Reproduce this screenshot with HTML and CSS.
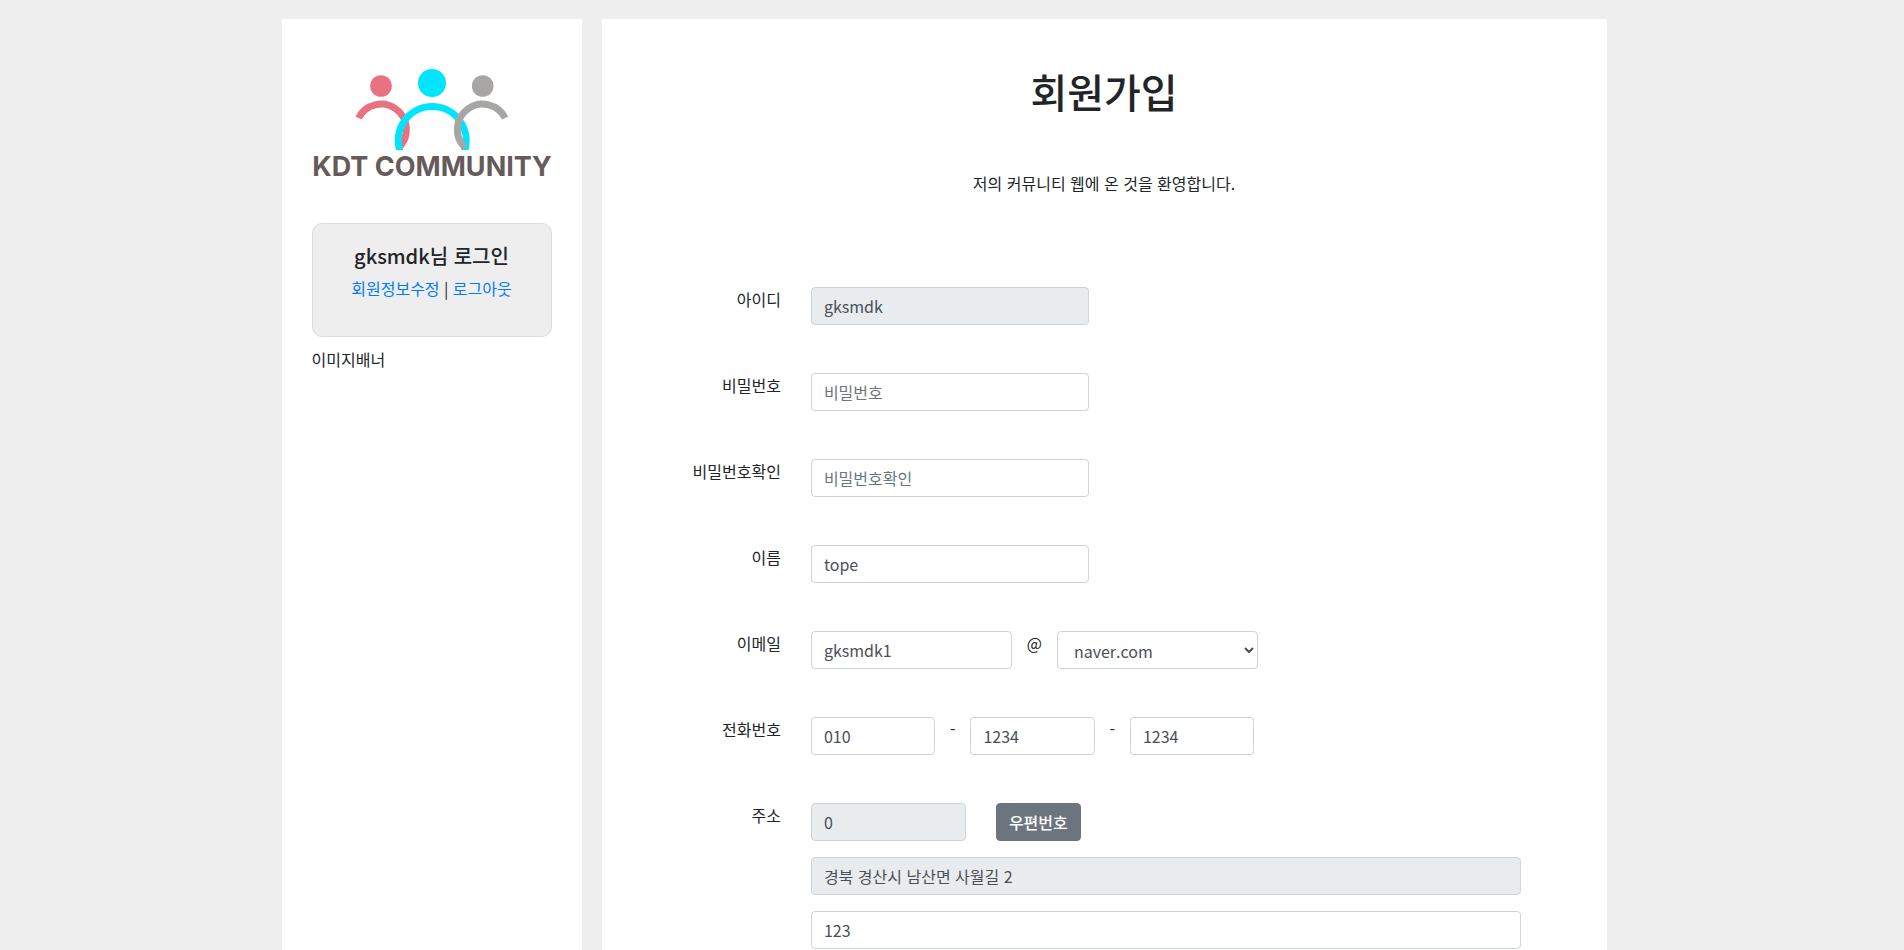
FILE: index.html
```html
<!DOCTYPE html>
<html lang="ko">
<head>
<meta charset="utf-8">
<title>KDT COMMUNITY</title>
<link rel="stylesheet" href="styles.css">
</head>
<body>
<div class="page">
  <aside class="sidebar">
    <svg class="logo" width="240" height="114" viewBox="312 65 240 114" role="img" aria-label="KDT COMMUNITY">
      <defs><clipPath id="base"><rect x="312" y="65" width="240" height="85"/></clipPath></defs>
      <g clip-path="url(#base)" fill="none" stroke-width="7">
        <circle cx="381" cy="86" r="10.8" fill="#e8727f"/>
        <path d="M358.500 118A25.300 25.300 0 1 1 398.900 147.400" stroke="#e8727f"/>
        <circle cx="432" cy="83" r="14" fill="#00e5ff"/>
        <path d="M400.200 152A34 34 0 1 1 464.200 152" stroke="#00e5ff"/>
        <circle cx="482.700" cy="86" r="10.800" fill="#a7a6a4"/>
        <path d="M505.200 118A25.300 25.300 0 1 0 464.800 147.400" stroke="#a7a6a4"/>
      </g>
      <text class="logo-text" x="312.300" y="176.300" textLength="239.500" lengthAdjust="spacingAndGlyphs">KDT COMMUNITY</text>
    </svg>
    <div class="login">
      <h5 class="login-name">gksmdk님 로그인</h5>
      <p class="login-links"><a href="#">회원정보수정</a> | <a href="#">로그아웃</a></p>
    </div>
    <div class="banner">이미지배너</div>
  </aside>
  <main class="content">
    <h1 class="title">회원가입</h1>
    <p class="welcome">저의 커뮤니티 웹에 온 것을 환영합니다.</p>
    <form class="form">
      <div class="row"><label class="label">아이디</label><input class="control w-id" value="gksmdk" readonly></div>
      <div class="row"><label class="label">비밀번호</label><input class="control w-id" type="password" placeholder="비밀번호"></div>
      <div class="row"><label class="label">비밀번호확인</label><input class="control w-id" type="password" placeholder="비밀번호확인"></div>
      <div class="row"><label class="label">이름</label><input class="control w-id" value="tope"></div>
      <div class="row"><label class="label">이메일</label><input class="control w-mail" value="gksmdk1"><span class="sep at">@</span><select class="control w-mail"><option>naver.com</option></select></div>
      <div class="row"><label class="label">전화번호</label><input class="control w-tel" value="010"><span class="sep dash">-</span><input class="control w-tel" value="1234"><span class="sep dash">-</span><input class="control w-tel" value="1234"></div>
      <div class="row"><label class="label">주소</label>
        <div class="address">
          <div class="zip"><input class="control w-zip" value="0" readonly><button class="btn" type="button">우편번호</button></div>
          <input class="control w-full" value="경북 경산시 남산면 사월길 2" readonly>
          <input class="control w-full" value="123">
        </div>
      </div>
    </form>
  </main>
</div>
</body>
</html>
```
FILE: styles.css
```css
* { box-sizing: border-box; }
html { height: 950px; overflow: hidden; }
body {
  margin: 0;
  height: 950px;
  overflow: hidden;
  background: #eee;
  color: #212529;
  font: 400 16px/24px "Noto Sans CJK KR", sans-serif;
}
.page {
  display: flex;
  gap: 20px;
  width: 1325px;
  height: 950px;
  padding-top: 19px;
  margin-left: 281.5px;
}
.sidebar { width: 300px; padding: 46px 30px 0; background: #fff; }
.content { width: 1005px; padding-top: 48px; background: #fff; }
.logo { display: block; overflow: visible; }
.logo-text { font: 700 27.5px/1 Inter, sans-serif; fill: #665a5a; }
.login {
  height: 114px;
  margin-top: 44px;
  padding-top: 20px;
  border: 1px solid #ddd;
  border-radius: 10px;
  background: #eee;
  text-align: center;
}
.login-name { margin: 0 0 8px; font-size: 20px; font-weight: 500; line-height: 24px; }
.login-links { margin: 0; }
.login-links a { color: #007bff; text-decoration: none; }
.banner { margin-top: 10px; }
.title { margin: 0; font-size: 40px; font-weight: 500; line-height: 48px; text-align: center; }
.welcome { margin: 56px 0 92px; text-align: center; }
.form { display: flex; flex-direction: column; gap: 48px; }
.row { display: flex; align-items: flex-start; }
.label { width: 179.4px; margin-right: 30px; text-align: right; }
.control {
  height: 38px;
  margin: 0;
  padding: 6px 12px;
  border: 1px solid #ced4da;
  border-radius: 4px;
  background: #fff;
  color: #495057;
  font: inherit;
}
.control::placeholder { color: #6c757d; opacity: 1; }
.control[readonly] { background: #e9ecef; }
.w-id { width: 278px; }
.w-mail { width: 201px; }
.w-tel { width: 124.5px; }
.w-zip { width: 155px; }
.w-full { width: 710px; }
.sep { text-align: center; }
.at { width: 45px; }
.dash { width: 35px; }
.address { display: flex; flex-direction: column; gap: 16px; }
.zip { display: flex; gap: 30px; }
.btn {
  height: 38px;
  padding: 6px 12px;
  border: 1px solid #6c757d;
  border-radius: 4px;
  background: #6c757d;
  color: #fff;
  font: inherit;
  font-weight: 500;
}
```
